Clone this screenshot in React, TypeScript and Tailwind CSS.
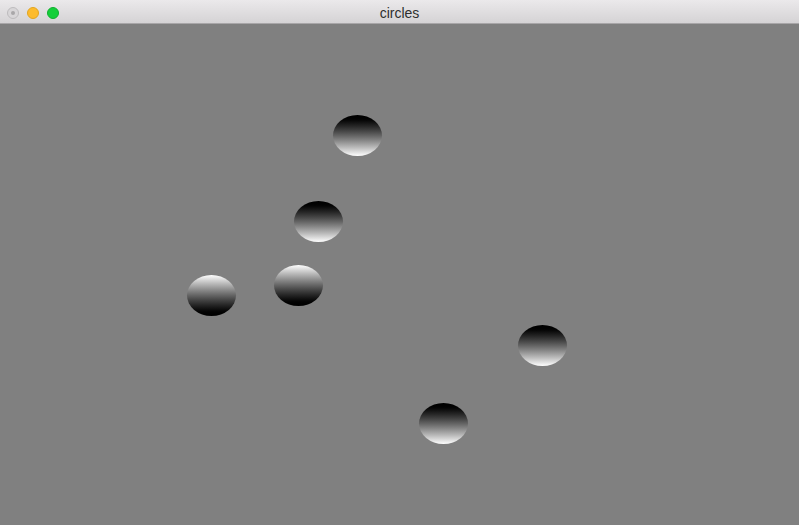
import React from "react";

const circles = [
  { x: 333, y: 115, up: false },
  { x: 294, y: 201, up: false },
  { x: 187, y: 275, up: true },
  { x: 274, y: 265, up: true },
  { x: 518, y: 325, up: false },
  { x: 419, y: 403, up: false },
];

export default function App() {
  return (
    <div className="w-[799px] h-[525px] flex flex-col overflow-hidden bg-[#808080]" style={{ fontFamily: '"Helvetica Neue", "Liberation Sans", Arial, sans-serif' }}>
      <div className="h-[24px] shrink-0 relative flex items-center justify-center bg-gradient-to-b from-[#ebe9eb] to-[#d5d3d5] border-b border-[#a8a6a8]">
        <div className="absolute left-[7px] top-[7px] flex gap-[8px]">
          <div className="w-[12px] h-[12px] rounded-full bg-[#d8d6d8] border border-[#bdbbbd] flex items-center justify-center">
            <div className="w-[4px] h-[4px] rounded-full bg-[#a9a7a9]" />
          </div>
          <div className="w-[12px] h-[12px] rounded-full bg-[#fdbb2d] border border-[#e3a51f]" />
          <div className="w-[12px] h-[12px] rounded-full bg-[#14cf3a] border border-[#10b02f]" />
        </div>
        <span className="text-[14px] text-[#2e2e2e] leading-none pt-[2px]">circles</span>
      </div>
      <div className="relative flex-1">
        {circles.map((c, i) => (
          <div
            key={i}
            className={
              "absolute w-[49px] h-[41px] rounded-[50%] " +
              (c.up
                ? "bg-gradient-to-b from-white to-black"
                : "bg-gradient-to-b from-black to-white")
            }
            style={{ left: c.x, top: c.y - 24 }}
          />
        ))}
      </div>
    </div>
  );
}
